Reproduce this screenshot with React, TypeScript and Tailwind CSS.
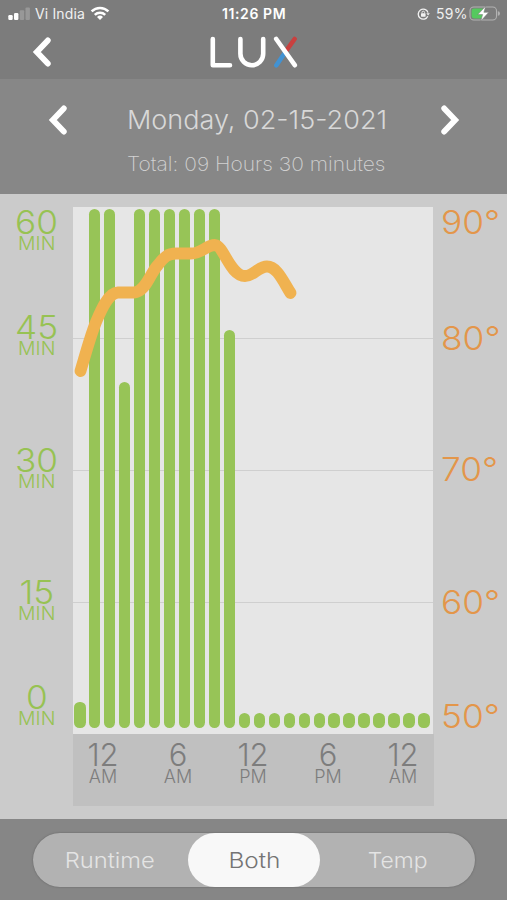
import React from "react";

const FULL = 519.5;
const STUB = 15;
const bars = [26, FULL, FULL, 346.5, FULL, FULL, FULL, FULL, FULL, FULL, 398, ...Array(13).fill(STUB)];

function StatusBar() {
  return (
    <div className="flex h-[27px] items-center pl-2 pr-[6px] text-[14px] text-[#f0f0f0]">
      <svg className="h-[14px] w-[22px] shrink-0" viewBox="0 0 22 14">
        <rect x="0.3" y="8" width="4.4" height="5" rx="1.2" fill="#fff" />
        <rect x="6" y="6" width="4.4" height="7" rx="1.2" fill="#fff" />
        <rect x="11.8" y="3.2" width="4.4" height="9.8" rx="1" fill="#989898" />
        <rect x="17.5" y="0.5" width="4.4" height="12.5" rx="1" fill="#989898" />
      </svg>
      <span className="ml-[5px] w-[50px] shrink-0 whitespace-nowrap text-[14px] tracking-[0.15px]">Vi India</span>
      <svg className="ml-[5px] h-[15px] w-5 shrink-0" viewBox="0 0 20 15" fill="none" stroke="#fff" strokeWidth="2.5">
        <path d="M1.6 5.4a12 12 0 0 1 16.8 0" />
        <path d="M4.8 8.8a7.4 7.4 0 0 1 10.4 0" />
        <path d="M10 14l-3-3.1a4.3 4.3 0 0 1 6 0z" fill="#fff" stroke="none" />
      </svg>
      <span className="ml-[112px] w-[66px] shrink-0 whitespace-nowrap text-[14px] font-semibold tracking-[0.6px] text-white">11:26 PM</span>
      <svg className="ml-[129px] h-3 w-[13px] shrink-0" viewBox="0 0 13 12" fill="none" stroke="#f2f2f2" strokeWidth="1.3">
        <path d="M10.8 8.2A5 5 0 1 1 11 4.6" />
        <path d="M9.4 5.2h3.4L11.1 7.6z" fill="#f2f2f2" stroke="none" />
        <rect x="4" y="5.3" width="4.6" height="3.4" rx="0.6" fill="#f2f2f2" stroke="none" />
        <path d="M5 5.4V4.5a1.3 1.3 0 0 1 2.6 0v0.9" strokeWidth="0.9" />
      </svg>
      <span className="ml-[6px] w-8 shrink-0 whitespace-nowrap text-[14px] tracking-[0.3px]">59%</span>
      <svg className="ml-px h-[17px] w-[31px] shrink-0" viewBox="0 0 31 17">
        <rect x="1" y="2" width="26.5" height="13" rx="3.8" fill="none" stroke="#b2b2b2" strokeWidth="1.1" />
        <path d="M28.8 6.3a2.2 2.2 0 0 1 0 4.4z" fill="#b2b2b2" />
        <rect x="2.6" y="3.6" width="13" height="9.8" rx="2.4" fill="#55c95e" />
        <path d="M16.8 1L8.8 9.6h4.8L11.8 16l8-8.7h-4.9z" fill="#fff" stroke="#7c7c7c" strokeWidth="0.6" />
      </svg>
    </div>
  );
}

function Chevron({ flip = false }: { flip?: boolean }) {
  return (
    <svg className={flip ? "h-[30px] w-5 -scale-x-100" : "h-[30px] w-5"} viewBox="0 0 20 30" fill="none" stroke="#fff" strokeWidth="5.8" strokeLinecap="round" strokeLinejoin="miter">
      <path d="M15.8 3.4L4.8 15l11 11.6" />
    </svg>
  );
}

function Logo() {
  return (
    <svg className="h-8 w-[88px]" viewBox="0 0 88 32" fill="none" strokeWidth="4.6" strokeLinecap="round">
      <path d="M2.8 3v26.2H20" stroke="#fff" strokeLinejoin="round" />
      <path d="M30.4 3v14.800a11.300 11.400 0 0 0 22.8 0V3" stroke="#fff" />
      <path d="M84.6 3L75 16.5" stroke="#c9403f" />
      <path d="M75 16.5L66.4 29.3" stroke="#4292d2" />
      <path d="M66.2 3l18.6 26.2" stroke="#fff" />
    </svg>
  );
}

function MinLabel({ value, className }: { value: string; className: string }) {
  return (
    <div className={"flex flex-col items-center font-light text-[#97c253] " + className}>
      <span className="scale-x-[1.1] text-[32px] leading-[24px]">{value}</span>
      <span className="mt-px scale-x-[1.05] text-[18.5px] leading-[14px]">MIN</span>
    </div>
  );
}

function TempLabel({ value, className }: { value: string; className: string }) {
  return <div className={"h-6 w-fit origin-left scale-x-[1.07] whitespace-nowrap text-[33px] font-light leading-[24px] text-[#e3964a] " + className}>{value}°</div>;
}

function Chart() {
  return (
    <div className="w-[361px] pt-[13px]">
      <div className="relative flex h-[527px] w-[360px] flex-col bg-[#e6e6e6]">
        <div className="h-[132px] border-b border-[#cfcfcf]" />
        <div className="h-[132px] border-b border-[#cfcfcf]" />
        <div className="h-[132px] border-b border-[#cfcfcf]" />
        <div className="absolute inset-x-0 bottom-[6px] flex items-end gap-[3.47px] pl-[1px]">
          {bars.map((h, i) => (
            <div key={i} className="w-[11.5px] shrink-0 rounded-[5.5px] bg-[#97c457]" style={{ height: h }} />
          ))}
        </div>
        <svg className="absolute inset-0 h-full w-full" viewBox="73 207 360 527" fill="none">
          <path
            d="M80.5 371C85 356 90 337 96 322C101 310 108 293 118 292.5H134C146 292 150 273 158 265C164 257 168 253.5 176 253.5H191C202 253.5 206 245 215 245C224 246 230 276 245 276C254 276 258 266.500 267 266.500C277 266.500 283 281 290.500 293"
            stroke="#f0b250"
            strokeWidth="11.8"
            strokeLinecap="round"
            strokeLinejoin="round"
          />
        </svg>
      </div>
      <div className="flex h-[72px] bg-[#c0c0c0] pt-[9px]">
        {[["12", "AM"], ["6", "AM"], ["12", "PM"], ["6", "PM"], ["12", "AM"]].map(([hour, half], i) => (
          <div key={i} className={"flex w-[75px] shrink-0 flex-col items-center font-light text-[#7d7d7d]" + (i === 0 ? " -ml-[7.5px]" : "")}>
            <span className="text-[31px] leading-[23px]">{hour}</span>
            <span className="mt-1 text-[18px] leading-[14px]">{half}</span>
          </div>
        ))}
      </div>
    </div>
  );
}

export default function App() {
  return (
    <div className="flex h-[900px] w-[507px] flex-col overflow-hidden bg-[#cbcbcb] font-['Inter','Liberation_Sans',sans-serif]">
      <header className="h-[79px] bg-[#7c7c7c]">
        <StatusBar />
        <div className="flex pl-8 pt-[9px]">
          <div className="flex h-8 items-center">
            <Chevron />
          </div>
          <div className="ml-[158px]">
            <Logo />
          </div>
        </div>
      </header>
      <section className="flex h-[115px] flex-col items-center bg-[#878787] pt-[26px]">
        <div className="flex w-full items-center justify-between pl-12 pr-[47px]">
          <Chevron />
          <span className="mr-[-6px] scale-x-[1.04] whitespace-nowrap text-[26px] font-light leading-[30px] text-[#d8d8d8]">Monday, 02-15-2021</span>
          <Chevron flip />
        </div>
        <span className="ml-[6px] mt-4 scale-x-[1.075] whitespace-nowrap text-[19.5px] font-extralight leading-[26px] text-[#d2d2d2]">Total: 09 Hours 30 minutes</span>
      </section>
      <main className="flex h-[625px]">
        <div className="w-[73px] pt-[17px]">
          <MinLabel value="60" className="" />
          <MinLabel value="45" className="mt-[66px]" />
          <MinLabel value="30" className="mt-[94px]" />
          <MinLabel value="15" className="mt-[93px]" />
          <MinLabel value="0" className="mt-[66px]" />
        </div>
        <Chart />
        <div className="w-[73px] pl-[7px] pt-4">
          <TempLabel value="90" className="" />
          <TempLabel value="80" className="mt-[92px]" />
          <TempLabel value="70" className="mt-[107px]" />
          <TempLabel value="60" className="mt-[109px]" />
          <TempLabel value="50" className="mt-[90px]" />
        </div>
      </main>
      <footer className="h-[81px] bg-[#868686] pl-[33px] pt-[14px]">
        <div className="flex h-[54px] w-[442px] rounded-full bg-[#b2b2b2] text-[22px] font-light shadow-[0_0_2px_#606060]">
          <div className="flex w-[155px] items-center justify-center text-[#e4e4e4]"><span className="ml-[-2px] scale-x-[1.08]">Runtime</span></div>
          <div className="flex w-[132px] items-center justify-center rounded-full bg-[#f8f8f8] text-[#747474]"><span className="scale-x-[1.11]">Both</span></div>
          <div className="flex w-[155px] items-center justify-center text-[#e4e4e4]"><span className="scale-x-[1.04]">Temp</span></div>
        </div>
      </footer>
    </div>
  );
}
